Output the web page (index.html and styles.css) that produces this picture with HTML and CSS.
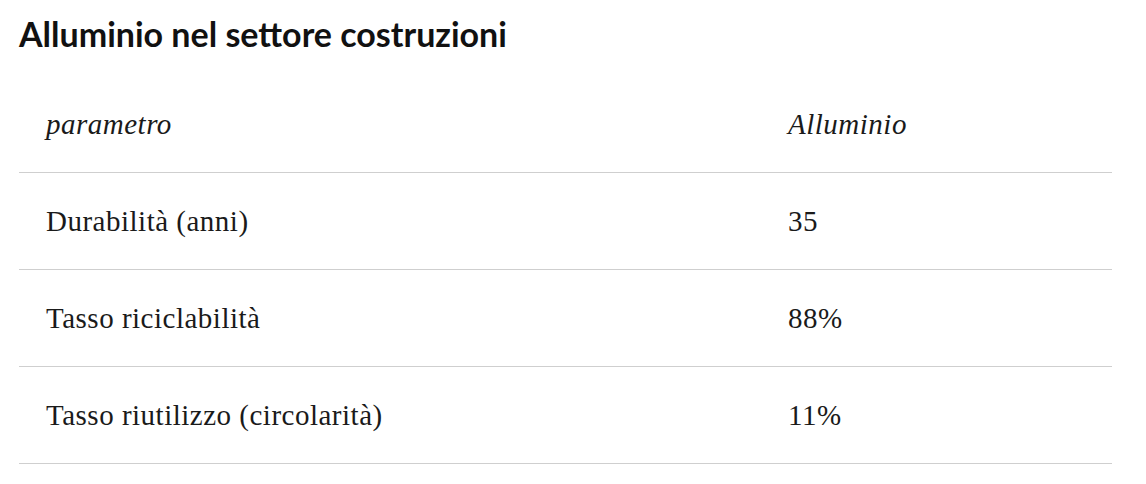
FILE: index.html
```html
<!DOCTYPE html>
<html lang="it">
<head>
<meta charset="utf-8">
<link rel="stylesheet" href="styles.css">
</head>
<body>
<main class="page">
  <h2 class="title">Alluminio nel settore costruzioni</h2>
  <table class="data">
    <thead>
      <tr><th class="c1">parametro</th><th class="c2">Alluminio</th></tr>
    </thead>
    <tbody>
      <tr><td>Durabilità (anni)</td><td>35</td></tr>
      <tr><td>Tasso riciclabilità</td><td>88%</td></tr>
      <tr><td>Tasso riutilizzo (circolarità)</td><td>11%</td></tr>
    </tbody>
  </table>
</main>
</body>
</html>
```
FILE: styles.css
```css
html, body { margin: 0; padding: 0; background: #fff; }
.page { padding: 15px 34px 0 19px; }
.title {
  margin: 0;
  font-family: "Lato", sans-serif;
  font-weight: 700;
  font-size: 34px;
  line-height: 38px;
  color: #111;
  letter-spacing: 0;
}
.data {
  margin-top: 23px;
  width: 1093px;
  border-collapse: collapse;
  font-family: "Liberation Serif", serif;
  font-size: 29px;
  letter-spacing: 0.5px;
  color: #1a1a1a;
}
.data th, .data td {
  text-align: left;
  padding: 30px 27px;
  line-height: 36px;
  border-bottom: 1px solid #cfcfcf;
}
.data th { font-weight: 400; font-style: italic; }
.data .c1 { width: 688px; }
.num { letter-spacing: -1px; }
```
